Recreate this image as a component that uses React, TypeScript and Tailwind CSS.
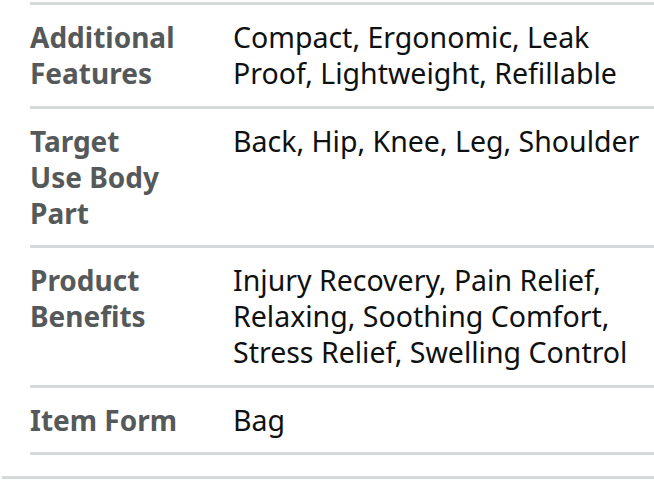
const rows = [
  { label: ["Additional", "Features"], value: "Compact, Ergonomic, Leak Proof, Lightweight, Refillable" },
  { label: ["Target", "Use Body", "Part"], value: "Back, Hip, Knee, Leg, Shoulder" },
  { label: ["Product", "Benefits"], value: "Injury Recovery, Pain Relief, Relaxing, Soothing Comfort, Stress Relief, Swelling Control" },
  { label: ["Item Form"], value: "Bag" },
]

export default function App() {
  return (
    <div className="w-[654px] h-[500px] bg-white overflow-hidden font-['Noto_Sans',sans-serif]">
      <div className="pt-[2px]">
        <div className="ml-[30px] border-t-[3px] border-[#d5d9d9]">
          {rows.map((row) => (
            <div key={row.value} className="flex border-b-[3px] border-[#d5d9d9] pt-[14px] pb-[14.5px] leading-[36px]">
              <div className="w-[203px] shrink-0 text-[28px] font-bold text-[#565959]">
                {row.label.map((line) => (
                  <div key={line} className="whitespace-nowrap">{line}</div>
                ))}
              </div>
              <div className="w-[410px] text-[28.5px] text-[#0f1111]">{row.value}</div>
            </div>
          ))}
        </div>
        <div className="mt-[21px] border-t-[3px] border-[#d5d9d9] ml-[2px]" />
      </div>
    </div>
  )
}
